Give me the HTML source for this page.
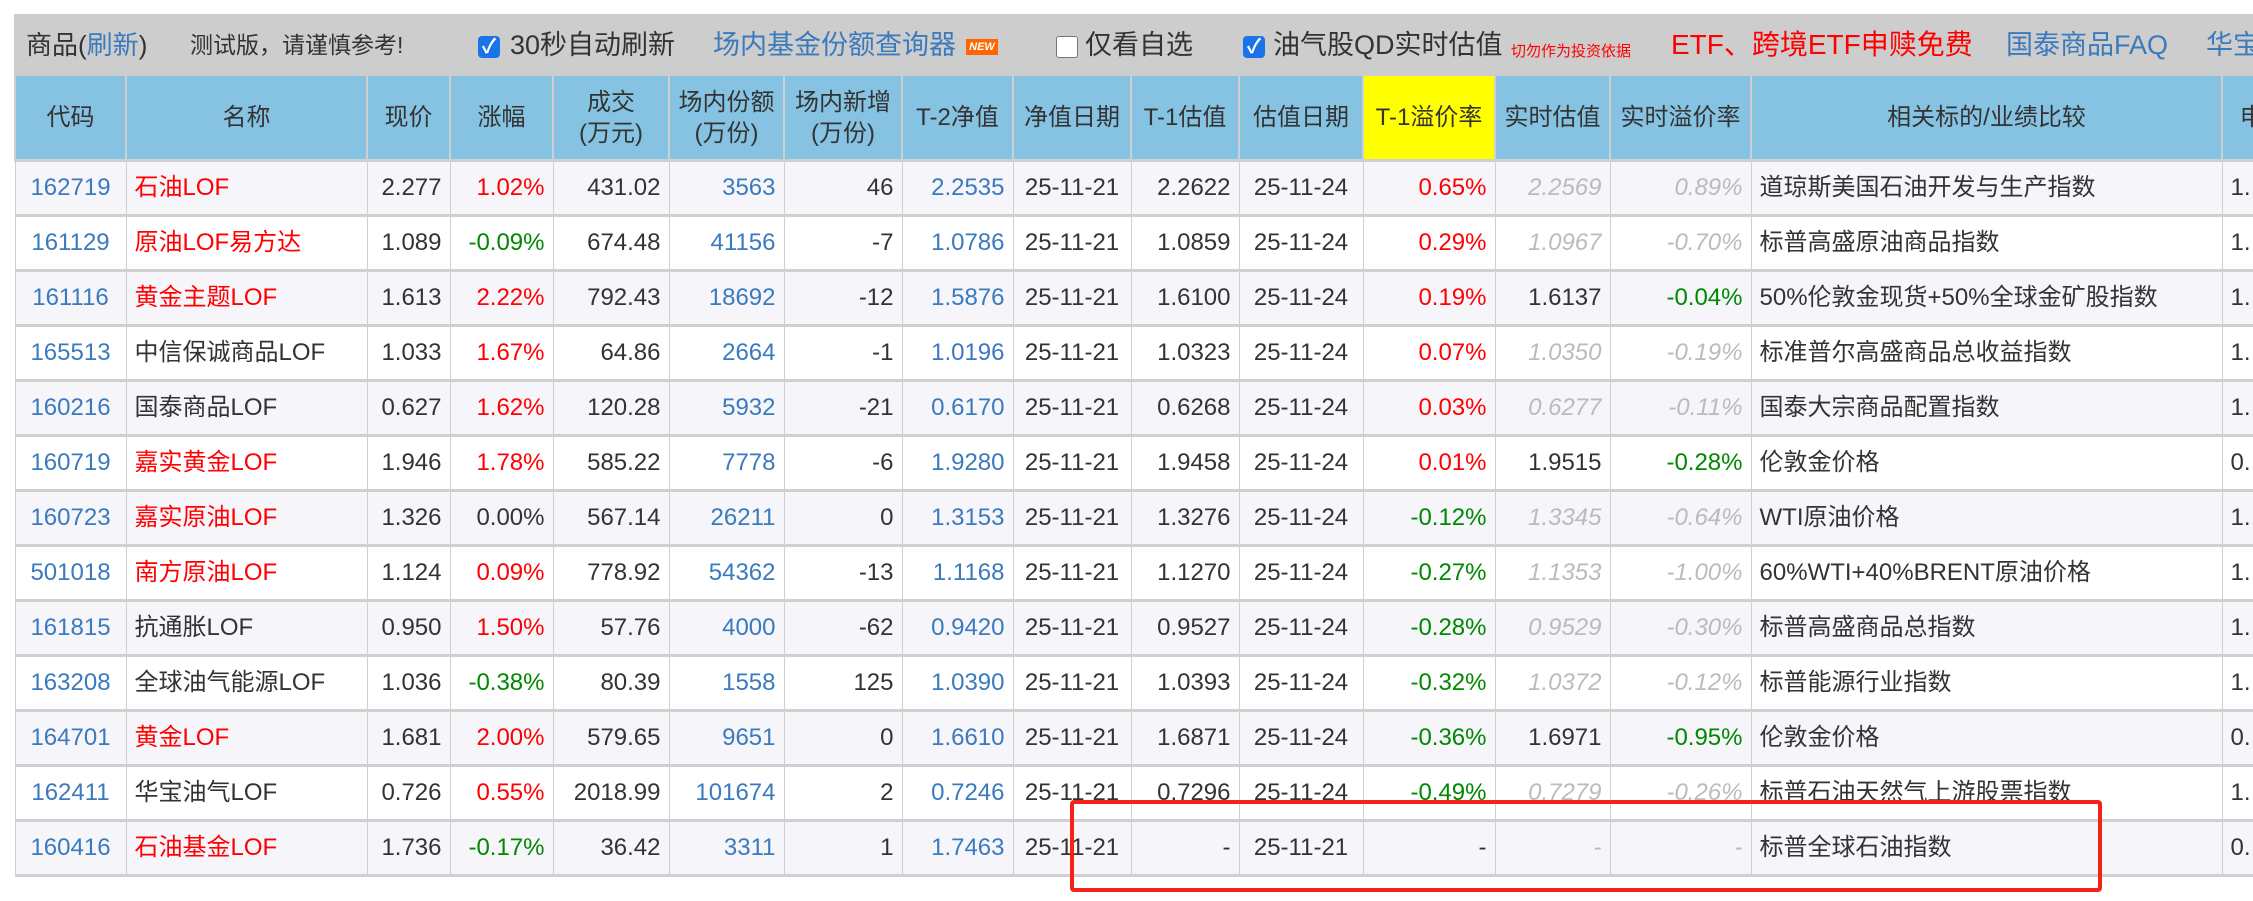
<!DOCTYPE html>
<html><head><meta charset="utf-8"><style>
html,body{margin:0;padding:0;background:#fff;width:2253px;height:901px;overflow:hidden;font-family:"Liberation Sans","Noto Sans CJK SC",sans-serif;color:#333}
.bar{position:absolute;left:14px;top:14px;width:2239px;height:62px;background:#cdcdcd}
.bar span{position:absolute;top:13px;font-size:26px;white-space:nowrap;line-height:36px}
.blue{color:#3a7abd}.red{color:#f00}.green{color:#080}
.cb{position:absolute;top:22px;width:22px;height:22px;background:#1a73e8;border-radius:4px;color:#fff;font-size:20px;line-height:22px;text-align:center;font-weight:bold}
.cbe{position:absolute;top:22px;width:20px;height:20px;background:#fff;border:1px solid #777;border-radius:3px}
table{position:absolute;left:14px;top:76px;width:2267px;border-collapse:collapse;table-layout:fixed;font-size:24px}
th{background:#86c3e3;font-weight:normal;color:#333;height:83px;border:2px solid #cfcfcf;border-top:none;line-height:31px;padding:0}
td{height:52px;line-height:30px;border-left:1px solid #cfcfcf;border-right:1px solid #cfcfcf;border-top:3px solid #d0d0d0;padding:0 8px;white-space:nowrap;overflow:hidden}
tr:nth-child(odd) td{background:#f5f5fa}
tr:nth-child(even) td{background:#fff}
tbody tr:last-child td{border-bottom:3px solid #d0d0d0}
.r{text-align:right}.c{text-align:center}.l{text-align:left}
.g{color:#bbb;font-style:italic}
th.y{background:#ffff00}
.box{position:absolute;left:1070px;top:800px;width:1024px;height:84px;border:4px solid #f52218;border-radius:4px}
.new{position:absolute;top:25px;width:32px;height:16px;background:#f60;color:#fff;font-size:11px;line-height:16px;text-align:center;font-weight:bold;font-style:italic}
</style></head><body>
<div class="bar">
<span style="left:12px">商品(<span class="blue" style="position:static">刷新</span>)</span>
<span style="left:176px;font-size:23px">测试版，请谨慎参考!</span>
<div class="cb" style="left:464px">✓</div>
<span style="left:496px;font-size:27px">30秒自动刷新</span>
<span class="blue" style="left:699px;font-size:27px">场内基金份额查询器</span>
<div class="new" style="left:952px">NEW</div>
<div class="cbe" style="left:1042px"></div>
<span style="left:1071px;font-size:27px">仅看自选</span>
<div class="cb" style="left:1229px">✓</div>
<span style="left:1259px;font-size:27px">油气股QD实时估值</span>
<span class="red" style="left:1497px;font-size:15px;top:20px">切勿作为投资依据</span>
<span class="red" style="left:1657px;font-size:28px">ETF、跨境ETF申赎免费</span>
<span class="blue" style="left:1992px;font-size:27px">国泰商品FAQ</span>
<span class="blue" style="left:2192px;font-size:27px">华宝</span>
</div>
<table>
<colgroup><col style="width:111px"><col style="width:241px"><col style="width:83px"><col style="width:103px"><col style="width:116px"><col style="width:115px"><col style="width:118px"><col style="width:111px"><col style="width:118px"><col style="width:108px"><col style="width:124px"><col style="width:132px"><col style="width:115px"><col style="width:141px"><col style="width:471px"><col style="width:60px"></colgroup>
<thead><tr><th>代码</th><th>名称</th><th>现价</th><th>涨幅</th><th>成交<br>(万元)</th><th>场内份额<br>(万份)</th><th>场内新增<br>(万份)</th><th>T-2净值</th><th>净值日期</th><th>T-1估值</th><th>估值日期</th><th class="y">T-1溢价率</th><th>实时估值</th><th>实时溢价率</th><th>相关标的/业绩比较</th><th>申</th></tr></thead>
<tbody>
<tr><td class="c blue">162719</td><td class="red">石油LOF</td><td class="r">2.277</td><td class="r red">1.02%</td><td class="r">431.02</td><td class="r blue">3563</td><td class="r">46</td><td class="r blue">2.2535</td><td class="c">25-11-21</td><td class="r">2.2622</td><td class="c">25-11-24</td><td class="r red">0.65%</td><td class="r g">2.2569</td><td class="r g">0.89%</td><td>道琼斯美国石油开发与生产指数</td><td>1.</td></tr>
<tr><td class="c blue">161129</td><td class="red">原油LOF易方达</td><td class="r">1.089</td><td class="r green">-0.09%</td><td class="r">674.48</td><td class="r blue">41156</td><td class="r">-7</td><td class="r blue">1.0786</td><td class="c">25-11-21</td><td class="r">1.0859</td><td class="c">25-11-24</td><td class="r red">0.29%</td><td class="r g">1.0967</td><td class="r g">-0.70%</td><td>标普高盛原油商品指数</td><td>1.</td></tr>
<tr><td class="c blue">161116</td><td class="red">黄金主题LOF</td><td class="r">1.613</td><td class="r red">2.22%</td><td class="r">792.43</td><td class="r blue">18692</td><td class="r">-12</td><td class="r blue">1.5876</td><td class="c">25-11-21</td><td class="r">1.6100</td><td class="c">25-11-24</td><td class="r red">0.19%</td><td class="r">1.6137</td><td class="r green">-0.04%</td><td>50%伦敦金现货+50%全球金矿股指数</td><td>1.</td></tr>
<tr><td class="c blue">165513</td><td>中信保诚商品LOF</td><td class="r">1.033</td><td class="r red">1.67%</td><td class="r">64.86</td><td class="r blue">2664</td><td class="r">-1</td><td class="r blue">1.0196</td><td class="c">25-11-21</td><td class="r">1.0323</td><td class="c">25-11-24</td><td class="r red">0.07%</td><td class="r g">1.0350</td><td class="r g">-0.19%</td><td>标准普尔高盛商品总收益指数</td><td>1.</td></tr>
<tr><td class="c blue">160216</td><td>国泰商品LOF</td><td class="r">0.627</td><td class="r red">1.62%</td><td class="r">120.28</td><td class="r blue">5932</td><td class="r">-21</td><td class="r blue">0.6170</td><td class="c">25-11-21</td><td class="r">0.6268</td><td class="c">25-11-24</td><td class="r red">0.03%</td><td class="r g">0.6277</td><td class="r g">-0.11%</td><td>国泰大宗商品配置指数</td><td>1.</td></tr>
<tr><td class="c blue">160719</td><td class="red">嘉实黄金LOF</td><td class="r">1.946</td><td class="r red">1.78%</td><td class="r">585.22</td><td class="r blue">7778</td><td class="r">-6</td><td class="r blue">1.9280</td><td class="c">25-11-21</td><td class="r">1.9458</td><td class="c">25-11-24</td><td class="r red">0.01%</td><td class="r">1.9515</td><td class="r green">-0.28%</td><td>伦敦金价格</td><td>0.</td></tr>
<tr><td class="c blue">160723</td><td class="red">嘉实原油LOF</td><td class="r">1.326</td><td class="r">0.00%</td><td class="r">567.14</td><td class="r blue">26211</td><td class="r">0</td><td class="r blue">1.3153</td><td class="c">25-11-21</td><td class="r">1.3276</td><td class="c">25-11-24</td><td class="r green">-0.12%</td><td class="r g">1.3345</td><td class="r g">-0.64%</td><td>WTI原油价格</td><td>1.</td></tr>
<tr><td class="c blue">501018</td><td class="red">南方原油LOF</td><td class="r">1.124</td><td class="r red">0.09%</td><td class="r">778.92</td><td class="r blue">54362</td><td class="r">-13</td><td class="r blue">1.1168</td><td class="c">25-11-21</td><td class="r">1.1270</td><td class="c">25-11-24</td><td class="r green">-0.27%</td><td class="r g">1.1353</td><td class="r g">-1.00%</td><td>60%WTI+40%BRENT原油价格</td><td>1.</td></tr>
<tr><td class="c blue">161815</td><td>抗通胀LOF</td><td class="r">0.950</td><td class="r red">1.50%</td><td class="r">57.76</td><td class="r blue">4000</td><td class="r">-62</td><td class="r blue">0.9420</td><td class="c">25-11-21</td><td class="r">0.9527</td><td class="c">25-11-24</td><td class="r green">-0.28%</td><td class="r g">0.9529</td><td class="r g">-0.30%</td><td>标普高盛商品总指数</td><td>1.</td></tr>
<tr><td class="c blue">163208</td><td>全球油气能源LOF</td><td class="r">1.036</td><td class="r green">-0.38%</td><td class="r">80.39</td><td class="r blue">1558</td><td class="r">125</td><td class="r blue">1.0390</td><td class="c">25-11-21</td><td class="r">1.0393</td><td class="c">25-11-24</td><td class="r green">-0.32%</td><td class="r g">1.0372</td><td class="r g">-0.12%</td><td>标普能源行业指数</td><td>1.</td></tr>
<tr><td class="c blue">164701</td><td class="red">黄金LOF</td><td class="r">1.681</td><td class="r red">2.00%</td><td class="r">579.65</td><td class="r blue">9651</td><td class="r">0</td><td class="r blue">1.6610</td><td class="c">25-11-21</td><td class="r">1.6871</td><td class="c">25-11-24</td><td class="r green">-0.36%</td><td class="r">1.6971</td><td class="r green">-0.95%</td><td>伦敦金价格</td><td>0.</td></tr>
<tr><td class="c blue">162411</td><td>华宝油气LOF</td><td class="r">0.726</td><td class="r red">0.55%</td><td class="r">2018.99</td><td class="r blue">101674</td><td class="r">2</td><td class="r blue">0.7246</td><td class="c">25-11-21</td><td class="r">0.7296</td><td class="c">25-11-24</td><td class="r green">-0.49%</td><td class="r g">0.7279</td><td class="r g">-0.26%</td><td>标普石油天然气上游股票指数</td><td>1.</td></tr>
<tr><td class="c blue">160416</td><td class="red">石油基金LOF</td><td class="r">1.736</td><td class="r green">-0.17%</td><td class="r">36.42</td><td class="r blue">3311</td><td class="r">1</td><td class="r blue">1.7463</td><td class="c">25-11-21</td><td class="r">-</td><td class="c">25-11-21</td><td class="r">-</td><td class="r g">-</td><td class="r g">-</td><td>标普全球石油指数</td><td>0.</td></tr>
</tbody></table>
<div class="box"></div>
</body></html>
